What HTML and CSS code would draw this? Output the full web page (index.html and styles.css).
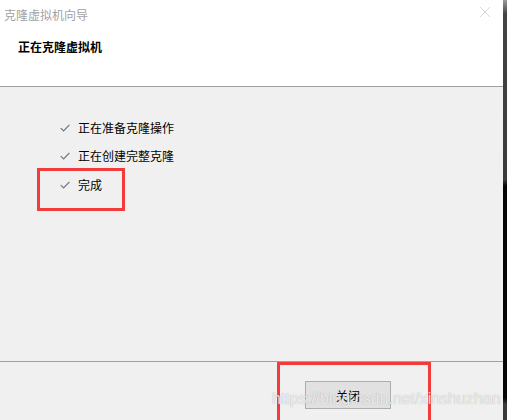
FILE: index.html
```html
<!DOCTYPE html>
<html lang="zh-CN">
<head>
    <meta charset="UTF-8">
    <title>克隆虚拟机向导</title>
    <link rel="stylesheet" href="styles.css">
</head>
<body>
    <div class="screen">
        <div class="window">
            <div class="titlebar">
                <span class="title">克隆虚拟机向导</span>
                <svg class="close" width="12" height="12" viewBox="0 0 12 12">
                    <path d="M1 1 L11 11 M11 1 L1 11" stroke="#d8d8d8" stroke-width="1" fill="none"/>
                </svg>
            </div>
            <div class="header">正在克隆虚拟机</div>
            <div class="content">
                <div class="step">
                    <svg class="check" width="10" height="8" viewBox="0 0 10 8">
                        <path d="M0.8 4.2 L3.6 7 L9.4 0.8" stroke="#6b7684" stroke-width="1.2" fill="none"/>
                    </svg>
                    <span>正在准备克隆操作</span>
                </div>
                <div class="step">
                    <svg class="check" width="10" height="8" viewBox="0 0 10 8">
                        <path d="M0.8 4.2 L3.6 7 L9.4 0.8" stroke="#6b7684" stroke-width="1.2" fill="none"/>
                    </svg>
                    <span>正在创建完整克隆</span>
                </div>
                <div class="step">
                    <svg class="check" width="10" height="8" viewBox="0 0 10 8">
                        <path d="M0.8 4.2 L3.6 7 L9.4 0.8" stroke="#6b7684" stroke-width="1.2" fill="none"/>
                    </svg>
                    <span>完成</span>
                </div>
            </div>
            <div class="footer">
                <button class="btn">关闭</button>
            </div>
        </div>
        <div class="edge"></div>

        <div class="mark mark-done"></div>
        <div class="mark mark-close"></div>
        <div class="watermark">https://blog.csdn.net/xinshuzhan</div>
    </div>
</body>
</html>
```

FILE: styles.css
```css
body {
    margin: 0;
    font-family: "Microsoft YaHei", "Noto Sans CJK SC", sans-serif;
    font-size: 12px;
    background: #f0f0f0;
}
.screen {
    position: relative;
    display: flex;
    width: 507px;
    height: 420px;
    overflow: hidden;
}
.window {
    width: 503px;
    display: flex;
    flex-direction: column;
}
.edge {
    width: 4px;
    background: linear-gradient(#9a9a9a 0px, #444 14px, #3a3a3a 180px, #050505 186px, #050505 398px, #3a3a3a 404px);
}
.titlebar {
    height: 28px;
    background: white;
    display: flex;
    align-items: center;
    justify-content: space-between;
    padding: 0 12px 0 4px;
}
.title {
    color: #a3a3a3;
    font-size: 12px;
}
.close {
    margin-top: -4px;
}
.header {
    height: 59px;
    background: white;
    border-bottom: 1px solid #a0a0a0;
    box-sizing: border-box;
    padding: 10px 0 0 18px;
    font-weight: bold;
    color: #000;
}
.content {
    flex: 1;
    background: #f0f0f0;
    padding: 26px 0 0 60px;
    border-bottom: 1px solid #a0a0a0;
}
.step {
    height: 28.5px;
    display: flex;
    align-items: center;
    color: #000;
}
.check {
    margin-right: 8px;
    margin-top: 1px;
}
.footer {
    height: 58px;
    background: #f0f0f0;
    display: flex;
    justify-content: flex-end;
    align-items: flex-start;
    padding: 19px 112px 0 0;
    box-sizing: border-box;
}
.btn {
    width: 86px;
    height: 28px;
    background: #e1e1e1;
    border: 1px solid #adadad;
    font-family: "Microsoft YaHei", "Noto Sans CJK SC", sans-serif;
    font-size: 12px;
    color: #000;
    padding: 0;
}
.mark {
    position: absolute;
    border: 3px solid #f23b3b;
    box-sizing: border-box;
}
.mark-done {
    left: 37px;
    top: 168px;
    width: 88px;
    height: 43px;
}
.mark-close {
    left: 277px;
    top: 362px;
    width: 154px;
    height: 62px;
}
.watermark {
    position: absolute;
    left: 272px;
    top: 390px;
    font-family: "Liberation Sans", Arial, sans-serif;
    font-size: 16px;
    color: rgba(255, 255, 255, 0.8);
    text-shadow: 0 0 1px rgba(90, 90, 90, 0.55);
    white-space: nowrap;
}
```
